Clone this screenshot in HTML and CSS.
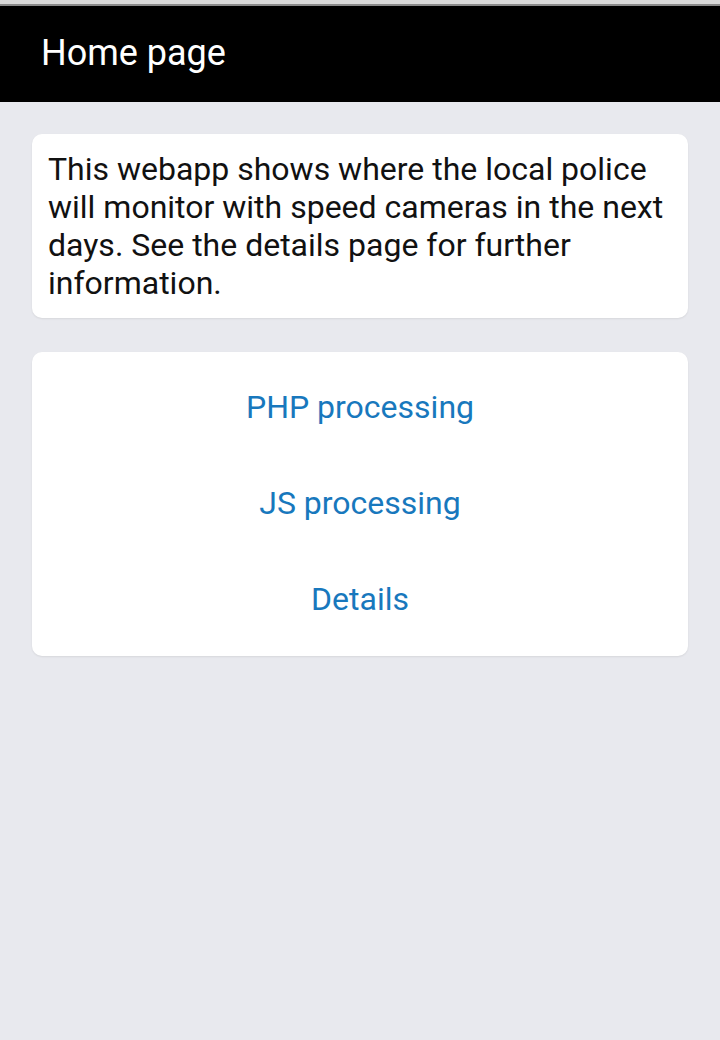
FILE: index.html
```html
<!DOCTYPE html>
<html>
<head>
<meta charset="utf-8">
<link rel="stylesheet" href="styles.css">
</head>
<body>
<div class="statusline"></div>
<header class="header"><h1 class="title">Home page</h1></header>
<main class="content">
  <section class="card intro">
    <p>This webapp shows where the local police will monitor with speed cameras in the next days. See the details page for further information.</p>
  </section>
  <nav class="card links">
    <a class="link" href="#">PHP processing</a>
    <a class="link" href="#">JS processing</a>
    <a class="link" href="#">Details</a>
  </nav>
</main>
</body>
</html>
```
FILE: styles.css
```css
html, body {
  margin: 0;
  padding: 0;
  background: #e8e9ee;
  font-family: Roboto, "Noto Sans", sans-serif;
}
.statusline {
  height: 4px;
  background: #d9d9d9;
  border-bottom: 2px solid #8a8a8a;
}
.header {
  background: #000;
  height: 96px;
  display: flex;
  align-items: center;
  padding: 0 41px 3px;
  box-sizing: border-box;
}
.title {
  margin: 0;
  color: #fff;
  font-weight: 400;
  font-size: 36px;
  line-height: 44px;
}
.content {
  padding: 32px;
  display: flex;
  flex-direction: column;
  gap: 34px;
}
.card {
  background: #fff;
  border-radius: 10px;
  box-shadow: 0 1px 2px rgba(0,0,0,0.08);
}
.intro {
  padding: 16px;
}
.intro p {
  margin: 0;
  font-size: 32px;
  line-height: 38px;
  color: #111;
}
.links {
  display: flex;
  flex-direction: column;
  padding: 7px 0 9px;
}
.link {
  display: flex;
  align-items: center;
  justify-content: center;
  height: 96px;
  font-size: 32px;
  color: #1878bd;
  text-decoration: none;
}
```
